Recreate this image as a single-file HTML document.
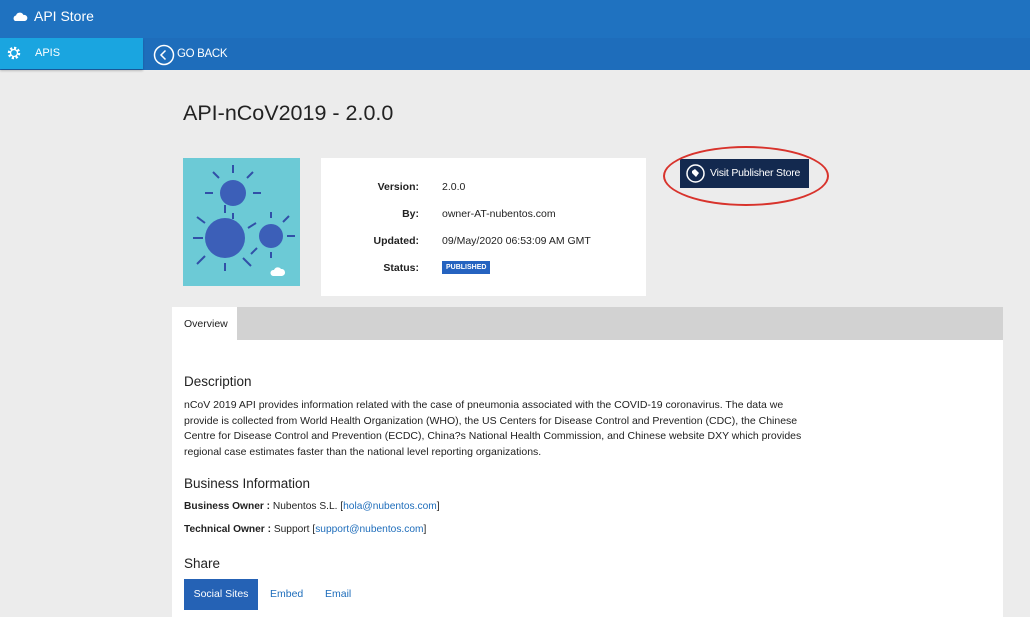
<!DOCTYPE html>
<html><head><style>
*{margin:0;padding:0;box-sizing:border-box}
body{width:1030px;height:614px;overflow:hidden;background:#ececec;font-family:"Liberation Sans",sans-serif;position:relative;color:#222}
.a{position:absolute}
</style></head><body>
<div class="a" style="left:0;top:0;width:1030px;height:38px;background:#1f72c0"></div>
<svg class="a" style="left:12px;top:11px" width="16" height="12" viewBox="0 0 16 12"><path d="M3 10a3 3 0 0 1 1-5.5A4 4 0 0 1 11.5 4 3 3 0 0 1 13 10z" fill="#fff"/></svg>
<div class="a" style="left:34px;top:8px;font-size:14px;color:#fff">API Store</div>
<div class="a" style="left:0;top:38px;width:1030px;height:32px;background:#1e6dbb"></div>
<div class="a" style="left:0;top:38px;width:143px;height:31px;background:#1aa5e0;box-shadow:0 2px 2px rgba(0,0,0,.2)"></div>
<svg class="a" style="left:6px;top:45px" width="16" height="16" viewBox="0 0 16 16"><circle cx="8" cy="8" r="5" fill="none" stroke="#fff" stroke-width="2.5" stroke-dasharray="2.2 1.7"/><circle cx="8" cy="8" r="3.5" fill="none" stroke="#fff" stroke-width="1.3"/></svg>
<div class="a" style="left:35px;top:47px;font-size:11px;color:#fff">APIS</div>
<svg class="a" style="left:153px;top:44px" width="22" height="22" viewBox="0 0 22 22"><circle cx="11" cy="11" r="9.5" fill="none" stroke="#fff" stroke-width="1.5"/><path d="M12.5 6.5 8 11l4.5 4.5" fill="none" stroke="#fff" stroke-width="1.5"/></svg>
<div class="a" style="left:177px;top:48px;font-size:11.5px;color:#fff;letter-spacing:-0.3px">GO BACK</div>
<div class="a" style="left:183px;top:101px;font-size:21.5px;color:#222">API-nCoV2019 - 2.0.0</div>
<div class="a" style="left:183px;top:158px;width:117px;height:128px;background:#6ccad6;overflow:hidden">
<svg width="117" height="128"><g fill="#3c5fb8"><circle cx="50" cy="35" r="13"/><circle cx="42" cy="80" r="20"/><circle cx="88" cy="78" r="12"/></g><g stroke="#3150a8" stroke-width="2"><path d="M50 15v-8M30 35h-8M70 35h8M50 55v6M36 20l-6-6M64 20l6-6M20 80h-10M42 55v-8M42 105v8M65 70l8-5M22 65l-8-6M22 98l-8 8M60 100l8 8M88 60v-6M104 78h8M88 94v6M74 90l-6 6M100 64l6-6"/></g><path d="M90 118a3 3 0 0 1 1-6 4 4 0 0 1 7-1 3 3 0 0 1 1 7z" fill="#fff"/></svg></div>
<div class="a" style="left:321px;top:158px;width:325px;height:138px;background:#fff;font-size:10.5px">
<div class="a" style="left:0;top:23px;width:98px;text-align:right;font-weight:bold">Version:</div><div class="a" style="left:121px;top:23px">2.0.0</div>
<div class="a" style="left:0;top:50px;width:98px;text-align:right;font-weight:bold">By:</div><div class="a" style="left:121px;top:50px">owner-AT-nubentos.com</div>
<div class="a" style="left:0;top:77px;width:98px;text-align:right;font-weight:bold">Updated:</div><div class="a" style="left:121px;top:77px">09/May/2020 06:53:09 AM GMT</div>
<div class="a" style="left:0;top:104px;width:98px;text-align:right;font-weight:bold">Status:</div><div class="a" style="left:121px;top:103px;background:#2563c0;color:#fff;font-size:7px;font-weight:bold;padding:3px 4px">PUBLISHED</div>
</div>
<div class="a" style="left:680px;top:159px;width:129px;height:29px;background:#13294f"></div>
<svg class="a" style="left:686px;top:164px" width="19" height="19" viewBox="0 0 19 19"><circle cx="9.5" cy="9.5" r="8.5" fill="none" stroke="#fff" stroke-width="1.5"/><path d="M6 7l3-2 4 4-3 4-4-4z" fill="#fff"/></svg>
<div class="a" style="left:710px;top:167px;font-size:10.5px;color:#fff;letter-spacing:-0.2px">Visit Publisher Store</div>
<div class="a" style="left:663px;top:146px;width:166px;height:60px;border:2px solid #d8332c;border-radius:50%"></div>
<div class="a" style="left:172px;top:307px;width:831px;height:310px;background:#fff"></div>
<div class="a" style="left:237px;top:307px;width:766px;height:33px;background:#d2d2d2"></div>
<div class="a" style="left:184px;top:318px;font-size:10.5px">Overview</div>
<div class="a" style="left:184px;top:374px;font-size:13.5px">Description</div>
<div class="a" style="left:184px;top:398px;width:700px;font-size:10.5px;line-height:15.5px;white-space:nowrap">nCoV 2019 API provides information related with the case of pneumonia associated with the COVID-19 coronavirus. The data we<br>provide is collected from World Health Organization (WHO), the US Centers for Disease Control and Prevention (CDC), the Chinese<br>Centre for Disease Control and Prevention (ECDC), China?s National Health Commission, and Chinese website DXY which provides<br>regional case estimates faster than the national level reporting organizations.</div>
<div class="a" style="left:184px;top:476px;font-size:13.5px">Business Information</div>
<div class="a" style="left:184px;top:501px;font-size:10.2px"><b>Business Owner :</b> Nubentos S.L. [<span style="color:#1e6dbb">hola@nubentos.com</span>]</div>
<div class="a" style="left:184px;top:524px;font-size:10.2px"><b>Technical Owner :</b> Support [<span style="color:#1e6dbb">support@nubentos.com</span>]</div>
<div class="a" style="left:184px;top:556px;font-size:13.5px">Share</div>
<div class="a" style="left:184px;top:579px;width:74px;height:31px;background:#2562b5;color:#fff;font-size:10.5px;text-align:center;line-height:31px">Social Sites</div>
<div class="a" style="left:270px;top:588px;font-size:10.5px;color:#1e6dbb">Embed</div>
<div class="a" style="left:325px;top:588px;font-size:10.5px;color:#1e6dbb">Email</div>
</body></html>
